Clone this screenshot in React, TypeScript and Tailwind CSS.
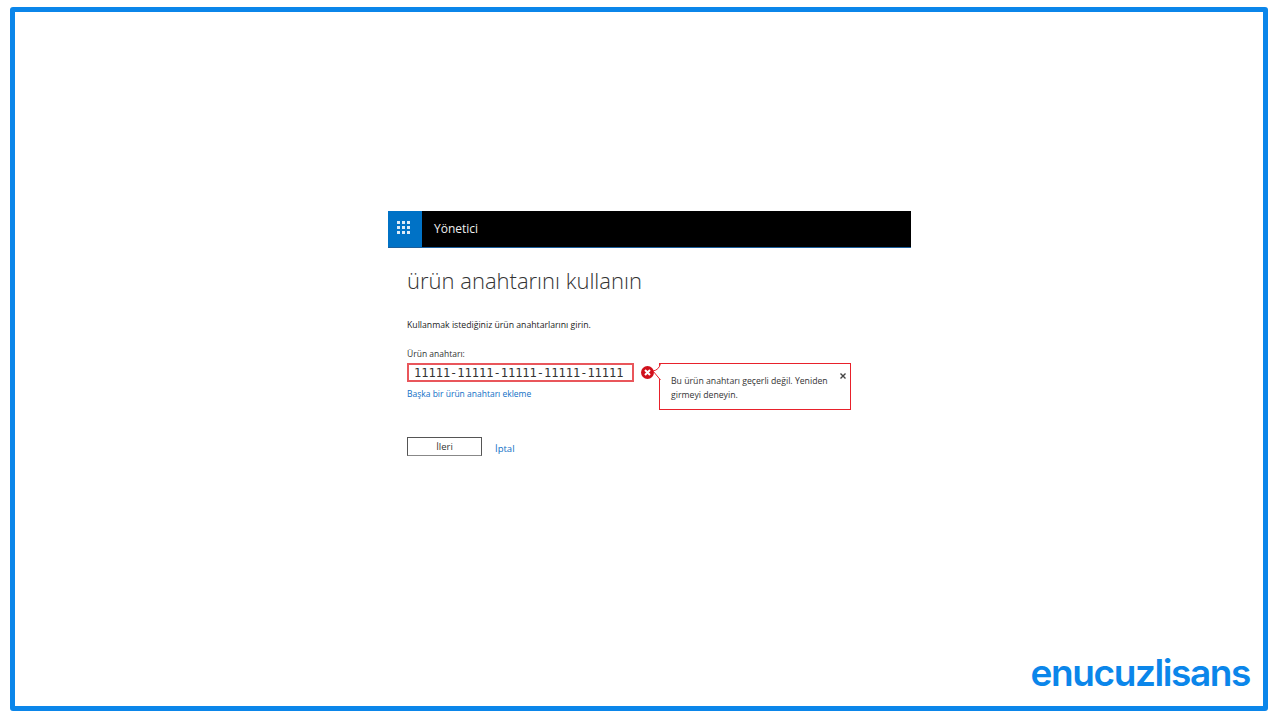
import React from 'react'

const segoe = { fontFamily: '"Open Sans", "Noto Sans", sans-serif' }

function WaffleIcon() {
  return (
    <div className="grid grid-cols-3 gap-[2px]">
      {Array.from({ length: 9 }).map((_, i) => (
        <span key={i} className="w-[3px] h-[3px] bg-[#dcebf8]" />
      ))}
    </div>
  )
}

function ErrorIcon() {
  return (
    <svg width="13" height="13" viewBox="0 0 13 13">
      <circle cx="6.5" cy="6.5" r="6.5" fill="#d0101c" />
      <path d="M4 4l5 5M9 4l-5 5" stroke="#fff" strokeWidth="2" />
    </svg>
  )
}

function ErrorCallout() {
  return (
    <div className="absolute left-[252px] top-0 w-[192px] h-[47px] border border-[#e8212b] bg-white pl-[11px] pt-[10px] pr-[15px] text-[8.7px] leading-[14px] text-[#333]">
      <svg className="absolute left-[-13px] top-[-1px]" width="14" height="20" viewBox="0 0 14 20">
        <path d="M13.5 0.5 Q12 7 6 8 L13.5 17" fill="#fff" stroke="#e8212b" strokeWidth="1" />
      </svg>
      Bu ürün anahtarı geçerli değil. Yeniden girmeyi deneyin.
      <svg className="absolute right-[4px] top-[9px]" width="6" height="6" viewBox="0 0 6 6">
        <path d="M0.5 0.5l5 5M5.5 0.5l-5 5" stroke="#444" strokeWidth="1.4" />
      </svg>
    </div>
  )
}

export default function App() {
  return (
    <div className="w-[1280px] h-[720px] bg-white pt-[7px] pl-[10px] pr-[12px] pb-[9px]" style={segoe}>
      <div className="relative h-full border-[5px] border-[#0b86ea] rounded-[3px] pl-[373px] pt-[199px]">
        <div className="w-[523px]">
          <div className="flex h-[37px] bg-black border-b border-[#1c5f9c]">
            <div className="w-[34px] bg-[#0072c6] flex items-center justify-center pb-[3px] pr-[4px]">
              <WaffleIcon />
            </div>
            <div className="pl-[12px] text-[12px] leading-[36px] text-[#f0f0f0]">Yönetici</div>
          </div>

          <div className="pl-[19px]">
            <h1 className="mt-[15px] text-[22px] leading-[34px] font-light text-[#333]">ürün anahtarını kullanın</h1>

            <p className="mt-[21px] text-[8.7px] leading-[14px] text-[#222]">Kullanmak istediğiniz ürün anahtarlarını girin.</p>

            <label className="block mt-[15px] text-[8.5px] leading-[14px] text-[#333]">Ürün anahtarı:</label>

            <div className="relative mt-[2px] flex items-center h-[19px]">
              <div className="w-[227px] h-[19px] border-2 border-[#e9565b] pl-[5px] text-[12px] leading-[17px] text-[#333]" style={{ fontFamily: '"DejaVu Sans Mono", monospace' }}>
                11111-11111-11111-11111-11111
              </div>
              <div className="ml-[7px]">
                <ErrorIcon />
              </div>
              <ErrorCallout />
            </div>

            <a className="block mt-[5px] text-[8.5px] leading-[14px] text-[#0f6fc6]">Başka bir ürün anahtarı ekleme</a>

            <div className="mt-[36px] flex items-center">
              <button className="w-[75px] h-[19px] border border-[#555] border-b-[#888] text-[9.5px] leading-[17px] text-[#333] bg-white">İleri</button>
              <a className="ml-[13px] mt-[5px] text-[9.5px] text-[#0f6fc6]">İptal</a>
            </div>
          </div>
        </div>

        <div className="absolute right-[13px] bottom-[10px] text-[37px] leading-[46px] font-semibold tracking-[-1.4px] text-[#0b86ea]" style={{ fontFamily: 'Inter, sans-serif' }}>
          enucuzlisans
        </div>
      </div>
    </div>
  )
}
